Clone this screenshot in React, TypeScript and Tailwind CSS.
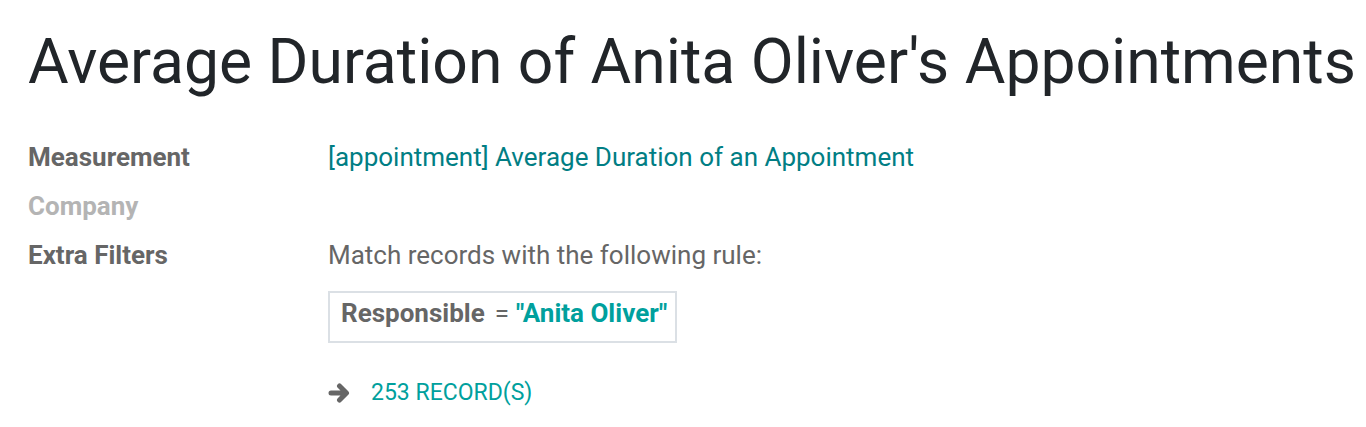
export default function App() {
  return (
    <div className="min-h-screen bg-white font-['Roboto',sans-serif]">
      <div className="pl-[28px] pt-[22px]">
        <h1 className="whitespace-nowrap text-[62.4px] leading-[80px] text-[#212529] font-normal">
          Average Duration of Anita Oliver's Appointments
        </h1>

        <div className="mt-[31px] grid grid-cols-[300px_1fr] text-[26px] leading-[49px]">
          <div className="font-bold text-[#666666]">Measurement</div>
          <div className="text-[#017e84]">[appointment] Average Duration of an Appointment</div>

          <div className="font-bold text-[#b4b4b4]">Company</div>
          <div></div>

          <div className="font-bold text-[#666666]">Extra Filters</div>
          <div>
            <div className="text-[#666666]">Match records with the following rule:</div>
            <div className="mt-[11px] inline-flex items-center h-[52px] pb-[8px] leading-[30px] border-2 border-[#dbe0e5] pl-[11px] pr-[8px]">
              <span className="font-bold text-[#666666]">Responsible</span>
              <span className="ml-[10px] text-[#666666]">=</span>
              <span className="ml-[7px] font-bold text-[#00a09d]">"Anita Oliver"</span>
            </div>
            <div className="mt-[35px] flex items-center h-[30px] leading-[30px]">
              {/* fa-arrow-right */}
              <svg width="22" height="22" viewBox="0 0 22 22" className="text-[#666666]">
                <path d="M3 11h14M11.5 4l7 7-7 7" fill="none" stroke="currentColor" strokeWidth="5" strokeLinecap="round" strokeLinejoin="round" />
              </svg>
              <span className="ml-[21px] text-[#00a09d] text-[23px]">253 RECORD(S)</span>
            </div>
          </div>
        </div>
      </div>
    </div>
  )
}
